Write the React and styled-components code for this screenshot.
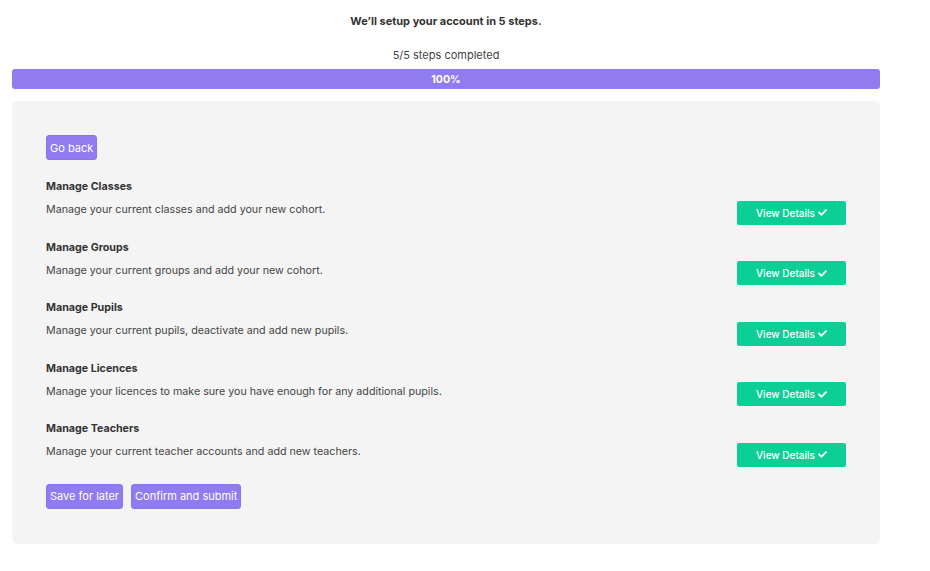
import React from 'react';
import styled, { createGlobalStyle } from "styled-components";
import { FaCheck } from "react-icons/fa";

const GlobalStyle = createGlobalStyle`
    body {
        margin: 0;
        background: white;
        font-family: Inter, "Noto Sans", sans-serif;
        color: #333;
    }
`
const Page = styled.div`
    width: 868px;
    padding: 12px 0 0 12px;
`
const Heading = styled.h1`
    margin: 2px 0 0;
    font-size: 11px;
    font-weight: 700;
    text-align: center;
    color: #333;
    line-height: 15px;
`
const StepsText = styled.p`
    margin: 19px 0 6px;
    font-size: 11px;
    text-align: center;
    color: #444;
    line-height: 15px;
`
const ProgressTrack = styled.div`
    height: 20px;
    border-radius: 3px;
    background: #eee;
    overflow: hidden;
`
const ProgressFill = styled.div`
    height: 100%;
    background: #917bf0;
    color: white;
    font-size: 10.5px;
    font-weight: 700;
    display: flex;
    align-items: center;
    justify-content: center;
`
const Panel = styled.div`
    margin-top: 12px;
    background: #f4f4f4;
    border-radius: 6px;
    padding: 34px 34px 35px 34px;
    display: flex;
    flex-direction: column;
`
const PurpleButton = styled.button`
    background: #917bf0;
    color: white;
    border: 1px solid #8a73ee;
    border-radius: 3px;
    font-family: Inter, "Noto Sans", sans-serif;
    font-size: 11px;
    height: 25px;
    padding: 0 3px;
    cursor: pointer;
`
const TopBar = styled.div`
    margin-bottom: 19px;
`
const TaskRow = styled.div`
    display: flex;
    justify-content: space-between;
    align-items: flex-start;
    height: 60.5px;
`
const TaskText = styled.div`
    display: flex;
    flex-direction: column;
    gap: 8px;
`
const TaskTitle = styled.span`
    font-size: 10.7px;
    font-weight: 700;
    color: #333;
    line-height: 15px;
`
const TaskDesc = styled.span`
    font-size: 10.7px;
    color: #444;
    line-height: 15px;
`
const DetailsButton = styled.button`
    width: 109px;
    height: 24px;
    margin-top: 21.5px;
    background: #0ccf95;
    color: white;
    border: none;
    border-radius: 2px;
    font-family: Inter, "Noto Sans", sans-serif;
    font-size: 10px;
    font-weight: 500;
    display: flex;
    align-items: center;
    justify-content: center;
    gap: 3px;
`
const Footer = styled.div`
    display: flex;
    gap: 8px;
    margin-top: 2px;
`

const tasks = [
    ["Manage Classes", "Manage your current classes and add your new cohort."],
    ["Manage Groups", "Manage your current groups and add your new cohort."],
    ["Manage Pupils", "Manage your current pupils, deactivate and add new pupils."],
    ["Manage Licences", "Manage your licences to make sure you have enough for any additional pupils."],
    ["Manage Teachers", "Manage your current teacher accounts and add new teachers."],
]

export default function App() {
    return (
        <>
            <GlobalStyle />
            <Page>
                <Heading>We’ll setup your account in 5 steps.</Heading>
                <StepsText>5/5 steps completed</StepsText>
                <ProgressTrack>
                    <ProgressFill style={{ width: '100%' }}>100%</ProgressFill>
                </ProgressTrack>
                <Panel>
                    <TopBar>
                        <PurpleButton>Go back</PurpleButton>
                    </TopBar>
                    {tasks.map(([title, desc]) => (
                        <TaskRow key={title}>
                            <TaskText>
                                <TaskTitle>{title}</TaskTitle>
                                <TaskDesc>{desc}</TaskDesc>
                            </TaskText>
                            <DetailsButton>View Details <FaCheck size={9} /></DetailsButton>
                        </TaskRow>
                    ))}
                    <Footer>
                        <PurpleButton>Save for later</PurpleButton>
                        <PurpleButton>Confirm and submit</PurpleButton>
                    </Footer>
                </Panel>
            </Page>
        </>
    )
}
